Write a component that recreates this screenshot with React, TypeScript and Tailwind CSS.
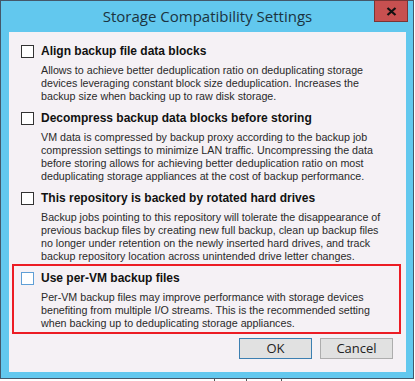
const options = [
  {
    title: "Align backup file data blocks",
    lines: [
      "Allows to achieve better deduplication ratio on deduplicating storage",
      "devices leveraging constant block size deduplication. Increases the",
      "backup size when backing up to raw disk storage.",
    ],
  },
  {
    title: "Decompress backup data blocks before storing",
    lines: [
      "VM data is compressed by backup proxy according to the backup job",
      "compression settings to minimize LAN traffic. Uncompressing the data",
      "before storing allows for achieving better deduplication ratio on most",
      "deduplicating storage appliances at the cost of backup performance.",
    ],
  },
  {
    title: "This repository is backed by rotated hard drives",
    lines: [
      "Backup jobs pointing to this repository will tolerate the disappearance of",
      "previous backup files by creating new full backup, clean up backup files",
      "no longer under retention on the newly inserted hard drives, and track",
      "backup repository location across unintended drive letter changes.",
    ],
  },
];

const perVm = {
  title: "Use per-VM backup files",
  lines: [
    "Per-VM backup files may improve performance with storage devices",
    "benefiting from multiple I/O streams. This is the recommended setting",
    "when backing up to deduplicating storage appliances.",
  ],
};

type Option = { title: string; lines: string[] };

const OptionBlock = ({ option, focused }: { option: Option; focused?: boolean }) => (
  <div className="flex flex-col">
    <div className="flex h-[16px] items-center gap-[7px]">
      <span
        className={
          focused
            ? "h-[13px] w-[13px] shrink-0 border border-[#5f9fd6] bg-white"
            : "h-[13px] w-[13px] shrink-0 border border-[#333] bg-white"
        }
      />
      <span className="whitespace-nowrap text-[12px] font-bold leading-[16px] text-[#111]">
        {option.title}
      </span>
    </div>
    <div className="mt-[5px] pl-[20px] text-[10.7px] leading-[13px] text-[#2a2a2a]">
      {option.lines.map((line) => (
        <div key={line} className="whitespace-nowrap">
          {line}
        </div>
      ))}
    </div>
  </div>
);

export default function App() {
  return (
    <div
      className="relative h-[381px] w-[415px] overflow-hidden bg-white"
      style={{ fontFamily: '"Liberation Sans", Arial, sans-serif' }}
    >
      {/* Dialog window */}
      <div className="relative flex h-[379px] w-[414px] flex-col border border-[#44586a] bg-[#62c8ee] pb-[6px] pl-[8px] pr-[7px]">
        <div className="flex h-[31px] items-center justify-center">
          <span
            className="text-[15px] text-[#1b3340]"
            style={{ fontFamily: '"Open Sans", "Liberation Sans", sans-serif' }}
          >
            Storage Compatibility Settings
          </span>
        </div>
        <button className="absolute right-[5px] top-[-1px] flex h-[22px] w-[34px] items-center justify-center border border-[#7b3434] bg-[#c75050]">
          <svg width="11" height="9" viewBox="0 0 11 9">
            <path d="M1.5 1 L9.5 8 M9.5 1 L1.5 8" stroke="#111" strokeWidth="2.2" />
          </svg>
        </button>

        {/* Content */}
        <div className="flex flex-1 flex-col bg-[#f5f1f5] pt-[11px]">
          <div className="flex flex-col gap-[7px] pl-[12px]">
            {options.map((o) => (
              <OptionBlock key={o.title} option={o} />
            ))}
          </div>
          <div className="ml-[3px] mr-[5px] mt-[1px] border-2 border-[#ec1c24] pb-[2px] pl-[7px] pt-[4px]">
            <OptionBlock option={perVm} focused />
          </div>
          <div className="mt-[4px] flex justify-end gap-[8px] pr-[13px]">
            <button
              className="h-[21px] w-[73px] border border-[#3c7fb1] bg-[#e1e1e1] text-[13px] text-[#222]"
              style={{ fontFamily: '"Open Sans", "Liberation Sans", sans-serif' }}
            >
              OK
            </button>
            <button
              className="h-[21px] w-[73px] border border-[#adadad] bg-[#e1e1e1] text-[13px] text-[#222]"
              style={{ fontFamily: '"Open Sans", "Liberation Sans", sans-serif' }}
            >
              Cancel
            </button>
          </div>
        </div>
      </div>

      {/* bits of the window behind */}
      <div className="absolute bottom-0 left-[214px] h-[2px] w-px bg-[#555]" />
      <div className="absolute bottom-0 left-[246px] h-[2px] w-px bg-[#555]" />
      <div className="absolute bottom-0 left-[281px] h-[2px] w-px bg-[#555]" />
    </div>
  );
}
